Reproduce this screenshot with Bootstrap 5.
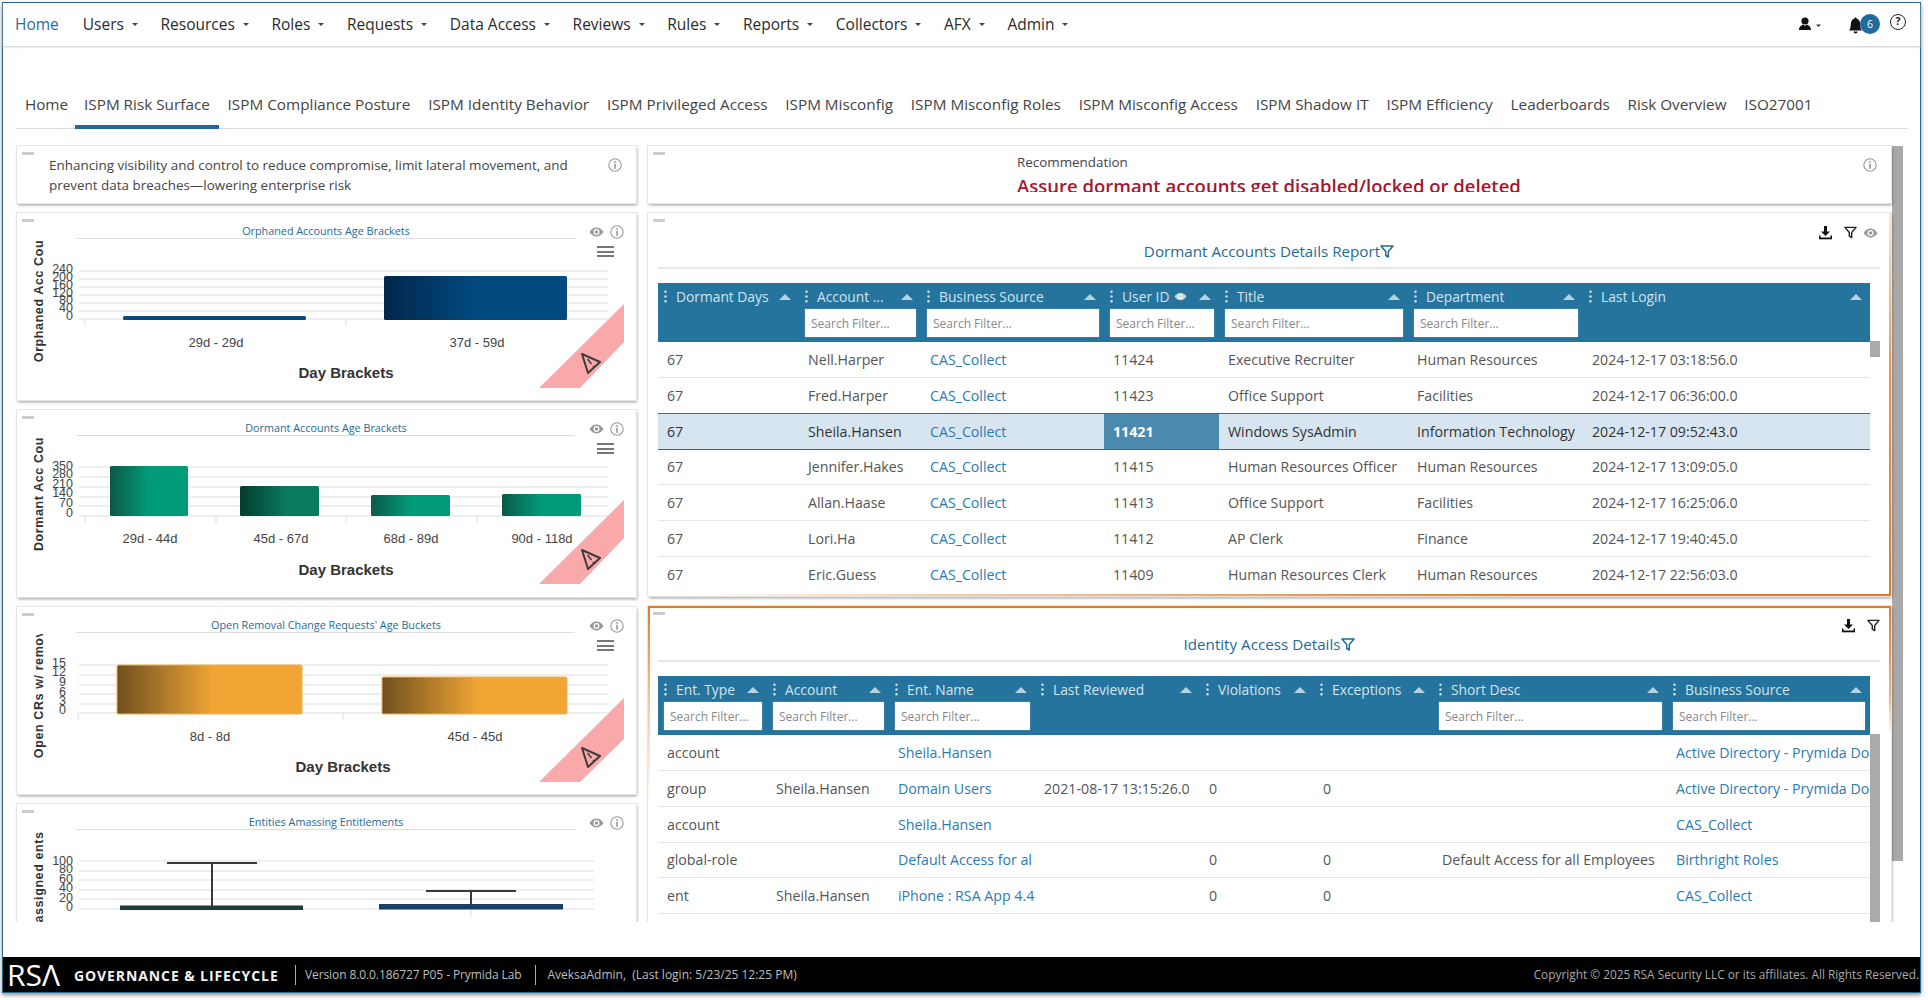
<!DOCTYPE html>
<html lang="en">
<head>
<meta charset="utf-8">
<title>ISPM Risk Surface</title>
<link href="https://cdn.jsdelivr.net/npm/bootstrap@5.3.0/dist/css/bootstrap.min.css" rel="stylesheet">
<style>
html,body{height:1000px;overflow:hidden;background:#fff}
body{margin:0;font-family:"Open Sans","Noto Sans",sans-serif;color:#444}
.app-frame{margin:2px 0 0 2px;width:1919px;height:991px;border:1px solid #2a6a8f;box-shadow:0 2px 4px rgba(0,0,0,.45);display:flex;flex-direction:column;background:#fff}
.top-nav{height:44px;border-bottom:1px solid #dcdcdc;box-shadow:0 1px 1px #eee;padding:0 12px;font-size:15.5px;color:#2b2b2b}
.top-item{color:#2b2b2b;text-decoration:none;display:inline-flex;align-items:center;margin-right:22.6px;line-height:42px;height:42px;margin-bottom:2px;white-space:nowrap}
.top-item.on{color:#27709c;margin-right:24px}
.caret-tiny{display:inline-block;width:0;height:0;border-left:3px solid transparent;border-right:3px solid transparent;border-top:3.5px solid #444;margin-left:8px;margin-top:1px}
.nav-right{position:relative;width:110px;height:44px}
.bell-badge{position:absolute;left:62px;top:11px;width:20px;height:20px;border-radius:50%;background:#1f6aa0;color:#fff;font-size:10.5px;text-align:center;line-height:20px}
.help-dot{position:absolute;left:92px;top:11px;width:16px;height:16px;border:1.6px solid #222;border-radius:50%;font-size:10.5px;font-weight:700;line-height:13px;text-align:center;color:#222}
.tab-strip{margin:40px 13px 0 13px;height:42px;border-bottom:1px solid #ddd;flex-wrap:nowrap;font-size:15.3px}
.tab-strip .nav-link{color:#444;padding:5px 8.9px 0;height:42px;line-height:24px;white-space:nowrap;border-bottom:4px solid transparent}
.tab-strip .nav-link.first-tab{padding-right:7px}
.tab-strip .nav-link.active{border-bottom-color:#22699a}
.dash-body{height:793px;overflow:hidden;padding:17px 0 0 14px;gap:12px;margin-bottom:0}
.left-col{width:619px;flex:none;gap:10px}
.right-col{width:1243px;flex:none;gap:10px}
.page-scroll{width:11px;height:715px;background:#a9a9a9;margin-left:-11px;flex:none}
.panel-box{background:#fff;position:relative;flex:none;box-shadow:0 0 0 1px #e6e6e6,1px 2px 3px rgba(0,0,0,.4)}
.grip{position:absolute;left:5px;top:6px;width:12px;height:3px;background:#ccc}
.h-57{height:57px}
.intro-text{padding:9px 0 0 32px;width:590px;font-size:13.45px;line-height:20px;color:#444}
.info-ico{width:14px;height:14px;color:#999;flex:none}
.eye-ico{width:15px;height:10px;color:#999;flex:none}
.top-info{position:absolute;right:14px;top:12px}
.reco-wrap{margin-left:369px;padding-top:7px}
.reco-label{font-size:13.4px;line-height:18px;color:#444;margin-bottom:3px}
.reco-text{font-size:18.5px;font-weight:600;line-height:24px;height:18px;overflow:hidden;color:#a5162e;white-space:nowrap}
.chart-box{height:187px;overflow:hidden}
.chart-box.last-one{height:300px}
.chart-head{margin-left:60px;height:26px}
.chart-title{width:498px;height:26px;padding-top:10px;line-height:15px;font-size:10.8px;text-align:center;color:#1e6a94;border-bottom:1px solid #ddd;flex:none}
.chart-tools{margin-left:14px;gap:6px;padding-top:12px;align-items:center;height:26px}
.burger{position:absolute;left:580px;top:33px;width:17px;height:11px;border-top:2px solid #777;border-bottom:2px solid #777}
.burger::after{content:"";display:block;height:2px;background:#777;margin-top:2.5px}
.chart-svg{display:block;width:619px;height:160px;margin-top:1px}
.chart-svg text{font-family:"Liberation Sans",Arial,sans-serif;fill:#444}
.chart-svg .tk{font-size:12.5px;text-anchor:end}
.chart-svg .cat{font-size:13px;text-anchor:middle}
.chart-svg .axt{font-size:15px;font-weight:700;text-anchor:middle;fill:#333}
.chart-svg .ylab{font-size:12.5px;font-weight:700;letter-spacing:.6px;text-anchor:middle;fill:#333}
.chart-svg .grid{stroke:#e9e9e9;stroke-width:1.4}
.chart-svg .tick{stroke:#ddd;stroke-width:1}
.chart-svg .rib{fill:#f9a9a9}
.tbl-box{height:383px;overflow:hidden}
.tbl-box2{height:400px;overflow:hidden}
.edge-b,.edge-r,.edge-t,.edge-l,.edge-r2{position:absolute;display:block}
.edge-b{left:0;right:0;bottom:0;height:2px;background:linear-gradient(to right,#fff 3%,#f6d3b5 20%,#e17b28 70%)}
.edge-r{right:0;top:0;bottom:0;width:2px;background:linear-gradient(to bottom,#fbe6d5,#e8954f 40%,#e17b28)}
.edge-t{left:0;right:0;top:0;height:2px;background:#e17b28}
.edge-l{left:0;top:0;width:2px;height:200px;background:linear-gradient(to bottom,#e17b28,#f6c9a4 50%,#fff)}
.edge-r2{right:0;top:0;width:2px;height:130px;background:linear-gradient(to bottom,#e17b28,#f2b27c 70%,#fff)}
.tbl-head{margin:0 11px 0 10px;height:56px;padding-top:28px;line-height:20px;border-bottom:2px solid #e6e6e6;text-align:center;font-size:15.2px;color:#1f6a96}
.fun-blue{width:14px;height:13px;color:#1f6a96;vertical-align:-1px}
.tbl-tools{position:absolute;right:11px;top:12px;gap:8px;align-items:center}
.tbl-tools.tools-a{right:13px}
.tbl-tools.tools-a .eye-ico{margin-left:-2px}
.dl-ico{width:15px;height:15px;color:#111;margin-right:3px}
.fun-ico{width:13px;height:13px;color:#222}
.tbl-wrap{margin:14px 11px 0 10px;align-items:flex-start}
.dt-table{table-layout:fixed;width:1212px;margin:0;flex:none;font-size:14.2px;border-collapse:collapse}
.dt-table>thead>tr>th{background:#25749e;color:#d3e3ec;font-weight:400;font-size:13.8px;padding:4px 5px 5px 6px;border:0;box-shadow:none;vertical-align:top;white-space:nowrap;overflow:hidden}
.th-line{height:19px;line-height:19px;margin-bottom:3px;position:relative;padding-left:12px;display:flex;align-items:center}
.dots{position:absolute;left:0;top:3px;width:3px;height:13px;color:#d3e3ec}
.sort-up{width:0;height:0;border-left:6px solid transparent;border-right:6px solid transparent;border-bottom:6px solid #b9d2df;margin-left:auto;margin-right:3px;flex:none}
.th-eye{width:13px;height:9px;color:#b9d2df;margin-left:5px;flex:none}
.dt-table .form-control{height:28px;min-height:0;border-radius:0;border:1px solid #fff;padding:0 5px;font-size:12px;line-height:26px;color:#555;box-shadow:0 0 1px #9bb;background:#fff}
.dt-table .form-control::placeholder{color:#888;opacity:1}
.dt-table>tbody>tr>td{height:35.7px;padding:0 0 0 9px;vertical-align:middle;white-space:nowrap;overflow:hidden;color:#555;border:0;border-bottom:1px solid #e6e6e6;box-shadow:none;background:#fff}
.dt-table>tbody>tr.end-row>td{border-bottom:0}
.dt-table>tbody>tr.pre-sel>td{border-bottom:1px solid #2a6f96}
.dt-table>tbody>tr.row-sel>td{background:#d6e5ef;color:#333;border-top:1px solid #2a6f96;border-bottom:1px solid #2a6f96}
.dt-table>tbody>tr.row-sel>td.uid-hit{background:#4b8aae;color:#fff;font-weight:700}
.dt-table a{color:#2b7ab4;text-decoration:none}
.thumb-a{width:10px;height:16px;background:#aaa;margin-top:58px;flex:none}
.thumb-b{width:10px;height:188px;background:#aaa;margin-top:58px;flex:none}
.w141{width:141px}.w122{width:122px}.w183{width:183px}.w115{width:115px}.w189{width:189px}.w175{width:175px}.w287{width:287px}
.w109{width:109px}.w146{width:146px}.w165{width:165px}.w114{width:114px}.w119{width:119px}.w234{width:234px}.w203{width:203px}
.site-foot{height:35px;margin-top:auto;background:#000;color:#bdbdbd;font-size:12px;white-space:nowrap;padding:1px 0 0 4px}
.rsa-logo{font-family:"Open Sans",sans-serif;font-weight:400;font-size:30px;line-height:34px;color:#fff;letter-spacing:0;width:67px;flex:none}
.gov-line{font-weight:700;font-size:14px;letter-spacing:.9px;color:#f2f2f2;width:221px;flex:none}
.foot-sep{width:1px;height:20px;background:#aaa;flex:none}
.ver-line{margin:0 14px 0 9px;font-size:12px;letter-spacing:-.1px}
.log-line{margin-left:11px;font-size:12px}
.copy-line{margin-left:auto;margin-right:1px;font-size:11.85px;color:#a9a9a9}
</style>
</head>
<body>
<svg width="0" height="0" class="position-absolute">
 <symbol id="i-info" viewBox="0 0 14 14"><circle cx="7" cy="7" r="6.2" fill="none" stroke="currentColor" stroke-width="1.1"/><rect x="6.2" y="5.8" width="1.6" height="5" fill="currentColor"/><rect x="6.2" y="3.2" width="1.6" height="1.6" fill="currentColor"/></symbol>
 <symbol id="i-eye" viewBox="0 0 15 10"><path d="M.5 5C2.5 2 5 .6 7.500 .6S12.500 2 14.500 5C12.500 8 10 9.400 7.500 9.400S2.500 8 .5 5Z" fill="currentColor"/><circle cx="7.500" cy="5" r="3" fill="#fff"/><circle cx="7.500" cy="5" r="1.700" fill="currentColor"/></symbol>
 <symbol id="i-fun" viewBox="0 0 14 13"><path d="M1 1H13L8.300 6.500V12L5.700 10.500V6.500Z" fill="none" stroke="currentColor" stroke-width="1.500" stroke-linejoin="round"/></symbol>
 <symbol id="i-dl" viewBox="0 0 15 15"><path d="M6 1H9V6.500H12L7.500 11 3 6.500H6Z" fill="currentColor"/><rect x="1" y="12.500" width="13" height="1.800" fill="currentColor"/><rect x="1" y="10.500" width="1.500" height="3" fill="currentColor"/><rect x="12.500" y="10.500" width="1.500" height="3" fill="currentColor"/></symbol>
 <symbol id="i-dots" viewBox="0 0 3 13"><circle cx="1.500" cy="1.700" r="1.200" fill="currentColor"/><circle cx="1.500" cy="6.500" r="1.200" fill="currentColor"/><circle cx="1.500" cy="11.300" r="1.200" fill="currentColor"/></symbol>
 <symbol id="i-warn" viewBox="-12 -12 24 24" overflow="visible"><path d="M-8 -9L10 -1L-2 10Z" fill="none" stroke="#3d3d3d" stroke-width="2" stroke-linejoin="round"/><path d="M-2.500 -4L1.500 1M3 3L4 4.200" stroke="#3d3d3d" stroke-width="1.500" fill="none"/></symbol>
</svg>
<div class="app-frame">
 <nav class="top-nav d-flex align-items-start">
  <a class="top-item on" href="#">Home</a>
  <a class="top-item" href="#">Users<i class="caret-tiny"></i></a>
  <a class="top-item" href="#">Resources<i class="caret-tiny"></i></a>
  <a class="top-item" href="#">Roles<i class="caret-tiny"></i></a>
  <a class="top-item" href="#">Requests<i class="caret-tiny"></i></a>
  <a class="top-item" href="#">Data Access<i class="caret-tiny"></i></a>
  <a class="top-item" href="#">Reviews<i class="caret-tiny"></i></a>
  <a class="top-item" href="#">Rules<i class="caret-tiny"></i></a>
  <a class="top-item" href="#">Reports<i class="caret-tiny"></i></a>
  <a class="top-item" href="#">Collectors<i class="caret-tiny"></i></a>
  <a class="top-item" href="#">AFX<i class="caret-tiny"></i></a>
  <a class="top-item" href="#">Admin<i class="caret-tiny"></i></a>
  <div class="nav-right ms-auto">
   <svg class="position-absolute top-0 start-0" width="110" height="44" viewBox="0 0 110 44"><circle cx="7" cy="18" r="3.600" fill="#111"/><path d="M1 27C1 23 4 22 5.500 21.500L7 23 8.500 21.500C10 22 13 23 13 27Z" fill="#111"/><path d="M18 21.500H23L20.500 24Z" fill="#333"/><path d="M51 27.500C53 26 52.500 22 53 19.500C53.500 17 55 16 56.500 15.500C56.500 14 58.500 14 58.500 15.500C60 16 61.500 17 62 19.500C62.500 22 62 26 64 27.500Z" fill="#111"/><path d="M55.500 28.500H59.500C59.500 31 55.500 31 55.500 28.500Z" fill="#111"/></svg>
   <span class="bell-badge">6</span>
   <span class="help-dot">?</span>
  </div>
 </nav>
 <ul class="nav tab-strip">
  <li class="nav-item"><a class="nav-link first-tab" href="#">Home</a></li>
  <li class="nav-item"><a class="nav-link active" href="#">ISPM Risk Surface</a></li>
  <li class="nav-item"><a class="nav-link" href="#">ISPM Compliance Posture</a></li>
  <li class="nav-item"><a class="nav-link" href="#">ISPM Identity Behavior</a></li>
  <li class="nav-item"><a class="nav-link" href="#">ISPM Privileged Access</a></li>
  <li class="nav-item"><a class="nav-link" href="#">ISPM Misconfig</a></li>
  <li class="nav-item"><a class="nav-link" href="#">ISPM Misconfig Roles</a></li>
  <li class="nav-item"><a class="nav-link" href="#">ISPM Misconfig Access</a></li>
  <li class="nav-item"><a class="nav-link" href="#">ISPM Shadow IT</a></li>
  <li class="nav-item"><a class="nav-link" href="#">ISPM Efficiency</a></li>
  <li class="nav-item"><a class="nav-link" href="#">Leaderboards</a></li>
  <li class="nav-item"><a class="nav-link" href="#">Risk Overview</a></li>
  <li class="nav-item"><a class="nav-link" href="#">ISO27001</a></li>
 </ul>
 <main class="dash-body d-flex">
  <div class="left-col d-flex flex-column">
   <section class="panel-box h-57">
    <span class="grip"></span>
    <div class="intro-text">Enhancing visibility and control to reduce compromise, limit lateral movement, and prevent data breaches—lowering enterprise risk</div>
    <svg class="info-ico top-info"><use href="#i-info"/></svg>
   </section>

   <section class="panel-box chart-box">
    <span class="grip"></span>
    <div class="chart-head d-flex"><div class="chart-title">Orphaned Accounts Age Brackets</div><div class="chart-tools d-flex"><svg class="eye-ico"><use href="#i-eye"/></svg><svg class="info-ico"><use href="#i-info"/></svg></div></div>
    <span class="burger"></span>
    <svg class="chart-svg" viewBox="17 241 619 160">
     <defs>
      <linearGradient id="gBlue"><stop offset="0" stop-color="#03264a"/><stop offset=".5" stop-color="#004a80"/></linearGradient>
      <linearGradient id="gGreenA"><stop offset="0" stop-color="#0b5a47"/><stop offset=".5" stop-color="#009b78"/></linearGradient>
      <linearGradient id="gGreenB"><stop offset="0" stop-color="#033d2e"/><stop offset=".6" stop-color="#0a7a5e"/></linearGradient>
      <linearGradient id="gAmber"><stop offset="0" stop-color="#6f501f"/><stop offset=".52" stop-color="#f0a535"/></linearGradient>
     </defs>
     <g class="grid"><path d="M79 272H608M79 280H608M79 288H608M79 296H608M79 304H608M79 312H608M79 320H608"/></g>
     <path class="tick" d="M85 320V327M346 320V327"/>
     <text class="ylab" transform="translate(43 302) rotate(-90)">Orphaned Acc Cou</text>
     <g class="tk"><text x="73" y="274">240</text><text x="73" y="282">200</text><text x="73" y="290">160</text><text x="73" y="298">120</text><text x="73" y="305">80</text><text x="73" y="313">40</text><text x="73" y="321">0</text></g>
     <rect x="123" y="317" width="183" height="4" rx="1.500" fill="#0a4a80"/>
     <rect x="384" y="277" width="183" height="44" rx="1.500" fill="url(#gBlue)"/>
     <text class="cat" x="216" y="348">29d - 29d</text><text class="cat" x="477" y="348">37d - 59d</text>
     <text class="axt" x="346" y="379">Day Brackets</text>
     <path class="rib" d="M624 305V343L580 389H539Z"/>
     <use href="#i-warn" x="578" y="352" width="24" height="24"/>
    </svg>
   </section>

   <section class="panel-box chart-box">
    <span class="grip"></span>
    <div class="chart-head d-flex"><div class="chart-title">Dormant Accounts Age Brackets</div><div class="chart-tools d-flex"><svg class="eye-ico"><use href="#i-eye"/></svg><svg class="info-ico"><use href="#i-info"/></svg></div></div>
    <span class="burger"></span>
    <svg class="chart-svg" viewBox="17 438 619 160">
     <g class="grid"><path d="M79 468H608M79 478H608M79 488H608M79 498H608M79 507H608M79 517H608"/></g>
     <path class="tick" d="M85 517V524M216 517V524M346 517V524M477 517V524"/>
     <text class="ylab" transform="translate(43 495) rotate(-90)">Dormant Acc Cou</text>
     <g class="tk"><text x="73" y="471">350</text><text x="73" y="479">280</text><text x="73" y="489">210</text><text x="73" y="498">140</text><text x="73" y="508">70</text><text x="73" y="518">0</text></g>
     <rect x="110" y="467" width="78" height="50" rx="1.500" fill="url(#gGreenA)"/>
     <rect x="240" y="487" width="79" height="30" rx="1.500" fill="url(#gGreenB)"/>
     <rect x="371" y="496" width="79" height="21" rx="1.500" fill="url(#gGreenA)"/>
     <rect x="502" y="495" width="79" height="22" rx="1.500" fill="url(#gGreenA)"/>
     <text class="cat" x="150" y="544">29d - 44d</text><text class="cat" x="281" y="544">45d - 67d</text><text class="cat" x="411" y="544">68d - 89d</text><text class="cat" x="542" y="544">90d - 118d</text>
     <text class="axt" x="346" y="576">Day Brackets</text>
     <path class="rib" d="M624 501V539L580 585H539Z"/>
     <use href="#i-warn" x="578" y="548" width="24" height="24"/>
    </svg>
   </section>

   <section class="panel-box chart-box">
    <span class="grip"></span>
    <div class="chart-head d-flex"><div class="chart-title">Open Removal Change Requests' Age Buckets</div><div class="chart-tools d-flex"><svg class="eye-ico"><use href="#i-eye"/></svg><svg class="info-ico"><use href="#i-info"/></svg></div></div>
    <span class="burger"></span>
    <svg class="chart-svg" viewBox="17 634 619 160">
     <g class="grid"><path d="M79 665H608M79 675H608M79 685H608M79 694H608M79 704H608M79 713H608"/></g>
     <path class="tick" d="M78 713V720M343 713V720"/>
     <text class="ylab" transform="translate(43 694) rotate(-90)">Open CRs w/ remov</text>
     <g class="tk"><text x="66" y="667">15</text><text x="66" y="676">12</text><text x="66" y="686">9</text><text x="66" y="696">6</text><text x="66" y="705">3</text><text x="66" y="714">0</text></g>
     <rect x="117" y="665" width="185" height="49" rx="1.500" fill="url(#gAmber)" stroke="#f2b04c"/>
     <rect x="382" y="677" width="185" height="37" rx="1.500" fill="url(#gAmber)" stroke="#f2b04c"/>
     <text class="cat" x="210" y="741">8d - 8d</text><text class="cat" x="475" y="741">45d - 45d</text>
     <text class="axt" x="343" y="772">Day Brackets</text>
     <path class="rib" d="M624 698V739L580 782H539Z"/>
     <use href="#i-warn" x="578" y="745" width="24" height="24"/>
    </svg>
   </section>

   <section class="panel-box chart-box last-one">
    <span class="grip"></span>
    <div class="chart-head d-flex"><div class="chart-title">Entities Amassing Entitlements</div><div class="chart-tools d-flex"><svg class="eye-ico"><use href="#i-eye"/></svg><svg class="info-ico"><use href="#i-info"/></svg></div></div>
    <svg class="chart-svg" viewBox="17 831 619 160">
     <g class="grid"><path d="M79 861H594M79 871H594M79 880H594M79 890H594M79 899H594M79 909H594"/></g>
     <path class="tick" d="M471 909V917"/>
     <text class="ylab" transform="translate(43 877) rotate(-90)">assigned ents</text>
     <g class="tk"><text x="73" y="865">100</text><text x="73" y="873">80</text><text x="73" y="883">60</text><text x="73" y="892">40</text><text x="73" y="902">20</text><text x="73" y="911">0</text></g>
     <path d="M167 863H257M212 863V906" stroke="#3a3a3a" stroke-width="2" fill="none"/>
     <rect x="120" y="905.500" width="183" height="4.500" fill="#1f3c3c"/>
     <path d="M426 891H516M471 891V904" stroke="#3a3a3a" stroke-width="2" fill="none"/>
     <rect x="379" y="904" width="184" height="5.500" fill="#1a3f66"/>
    </svg>
   </section>
  </div>

  <div class="right-col d-flex flex-column">
   <section class="panel-box h-57">
    <span class="grip"></span>
    <div class="reco-wrap"><div class="reco-label">Recommendation</div><div class="reco-text">Assure dormant accounts get disabled/locked or deleted</div></div>
    <svg class="info-ico top-info"><use href="#i-info"/></svg>
   </section>

   <section class="panel-box tbl-box">
    <span class="grip"></span><span class="edge-b"></span><span class="edge-r"></span>
    <div class="tbl-tools tools-a d-flex"><svg class="dl-ico"><use href="#i-dl"/></svg><svg class="fun-ico"><use href="#i-fun"/></svg><svg class="eye-ico"><use href="#i-eye"/></svg></div>
    <div class="tbl-head">Dormant Accounts Details Report<svg class="fun-blue"><use href="#i-fun"/></svg></div>
    <div class="tbl-wrap d-flex">
     <table class="table dt-table">
      <colgroup><col class="w141"><col class="w122"><col class="w183"><col class="w115"><col class="w189"><col class="w175"><col class="w287"></colgroup>
      <thead><tr>
       <th><div class="th-line"><svg class="dots"><use href="#i-dots"/></svg>Dormant Days<span class="sort-up"></span></div></th>
       <th><div class="th-line"><svg class="dots"><use href="#i-dots"/></svg>Account ...<span class="sort-up"></span></div><input class="form-control" placeholder="Search Filter..."></th>
       <th><div class="th-line"><svg class="dots"><use href="#i-dots"/></svg>Business Source<span class="sort-up"></span></div><input class="form-control" placeholder="Search Filter..."></th>
       <th><div class="th-line"><svg class="dots"><use href="#i-dots"/></svg>User ID<svg class="th-eye"><use href="#i-eye"/></svg><span class="sort-up"></span></div><input class="form-control" placeholder="Search Filter..."></th>
       <th><div class="th-line"><svg class="dots"><use href="#i-dots"/></svg>Title<span class="sort-up"></span></div><input class="form-control" placeholder="Search Filter..."></th>
       <th><div class="th-line"><svg class="dots"><use href="#i-dots"/></svg>Department<span class="sort-up"></span></div><input class="form-control" placeholder="Search Filter..."></th>
       <th><div class="th-line"><svg class="dots"><use href="#i-dots"/></svg>Last Login<span class="sort-up"></span></div></th>
      </tr></thead>
      <tbody>
       <tr><td>67</td><td>Nell.Harper</td><td><a href="#">CAS_Collect</a></td><td>11424</td><td>Executive Recruiter</td><td>Human Resources</td><td>2024-12-17 03:18:56.0</td></tr>
       <tr class="pre-sel"><td>67</td><td>Fred.Harper</td><td><a href="#">CAS_Collect</a></td><td>11423</td><td>Office Support</td><td>Facilities</td><td>2024-12-17 06:36:00.0</td></tr>
       <tr class="row-sel"><td>67</td><td>Sheila.Hansen</td><td><a href="#">CAS_Collect</a></td><td class="uid-hit">11421</td><td>Windows SysAdmin</td><td>Information Technology</td><td>2024-12-17 09:52:43.0</td></tr>
       <tr><td>67</td><td>Jennifer.Hakes</td><td><a href="#">CAS_Collect</a></td><td>11415</td><td>Human Resources Officer</td><td>Human Resources</td><td>2024-12-17 13:09:05.0</td></tr>
       <tr><td>67</td><td>Allan.Haase</td><td><a href="#">CAS_Collect</a></td><td>11413</td><td>Office Support</td><td>Facilities</td><td>2024-12-17 16:25:06.0</td></tr>
       <tr><td>67</td><td>Lori.Ha</td><td><a href="#">CAS_Collect</a></td><td>11412</td><td>AP Clerk</td><td>Finance</td><td>2024-12-17 19:40:45.0</td></tr>
       <tr class="end-row"><td>67</td><td>Eric.Guess</td><td><a href="#">CAS_Collect</a></td><td>11409</td><td>Human Resources Clerk</td><td>Human Resources</td><td>2024-12-17 22:56:03.0</td></tr>
      </tbody>
     </table>
     <div class="thumb-a"></div>
    </div>
   </section>

   <section class="panel-box tbl-box2">
    <span class="grip"></span><span class="edge-t"></span><span class="edge-l"></span><span class="edge-r2"></span>
    <div class="tbl-tools d-flex"><svg class="dl-ico"><use href="#i-dl"/></svg><svg class="fun-ico"><use href="#i-fun"/></svg></div>
    <div class="tbl-head">Identity Access Details<svg class="fun-blue"><use href="#i-fun"/></svg></div>
    <div class="tbl-wrap d-flex">
     <table class="table dt-table">
      <colgroup><col class="w109"><col class="w122"><col class="w146"><col class="w165"><col class="w114"><col class="w119"><col class="w234"><col class="w203"></colgroup>
      <thead><tr>
       <th><div class="th-line"><svg class="dots"><use href="#i-dots"/></svg>Ent. Type<span class="sort-up"></span></div><input class="form-control" placeholder="Search Filter..."></th>
       <th><div class="th-line"><svg class="dots"><use href="#i-dots"/></svg>Account<span class="sort-up"></span></div><input class="form-control" placeholder="Search Filter..."></th>
       <th><div class="th-line"><svg class="dots"><use href="#i-dots"/></svg>Ent. Name<span class="sort-up"></span></div><input class="form-control" placeholder="Search Filter..."></th>
       <th><div class="th-line"><svg class="dots"><use href="#i-dots"/></svg>Last Reviewed<span class="sort-up"></span></div></th>
       <th><div class="th-line"><svg class="dots"><use href="#i-dots"/></svg>Violations<span class="sort-up"></span></div></th>
       <th><div class="th-line"><svg class="dots"><use href="#i-dots"/></svg>Exceptions<span class="sort-up"></span></div></th>
       <th><div class="th-line"><svg class="dots"><use href="#i-dots"/></svg>Short Desc<span class="sort-up"></span></div><input class="form-control" placeholder="Search Filter..."></th>
       <th><div class="th-line"><svg class="dots"><use href="#i-dots"/></svg>Business Source<span class="sort-up"></span></div><input class="form-control" placeholder="Search Filter..."></th>
      </tr></thead>
      <tbody>
       <tr><td>account</td><td></td><td><a href="#">Sheila.Hansen</a></td><td></td><td></td><td></td><td></td><td><a href="#">Active Directory - Prymida Domain</a></td></tr>
       <tr><td>group</td><td>Sheila.Hansen</td><td><a href="#">Domain Users</a></td><td>2021-08-17 13:15:26.0</td><td>0</td><td>0</td><td></td><td><a href="#">Active Directory - Prymida Domain</a></td></tr>
       <tr><td>account</td><td></td><td><a href="#">Sheila.Hansen</a></td><td></td><td></td><td></td><td></td><td><a href="#">CAS_Collect</a></td></tr>
       <tr><td>global-role</td><td></td><td><a href="#">Default Access for al</a></td><td></td><td>0</td><td>0</td><td>Default Access for all Employees</td><td><a href="#">Birthright Roles</a></td></tr>
       <tr><td>ent</td><td>Sheila.Hansen</td><td><a href="#">iPhone : RSA App 4.4</a></td><td></td><td>0</td><td>0</td><td></td><td><a href="#">CAS_Collect</a></td></tr>
      </tbody>
     </table>
     <div class="thumb-b"></div>
    </div>
   </section>
  </div>
  <div class="page-scroll"></div>
 </main>
 <footer class="site-foot d-flex align-items-center">
  <div class="rsa-logo">RSΛ</div>
  <div class="gov-line">GOVERNANCE &amp; LIFECYCLE</div>
  <span class="foot-sep"></span>
  <div class="ver-line">Version 8.0.0.186727 P05 - Prymida Lab</div>
  <span class="foot-sep"></span>
  <div class="log-line">AveksaAdmin,&nbsp; (Last login: 5/23/25 12:25 PM)</div>
  <div class="copy-line">Copyright © 2025 RSA Security LLC or its affiliates. All Rights Reserved.</div>
 </footer>
</div>
<script src="https://cdn.jsdelivr.net/npm/bootstrap@5.3.0/dist/js/bootstrap.bundle.min.js"></script>
</body>
</html>
